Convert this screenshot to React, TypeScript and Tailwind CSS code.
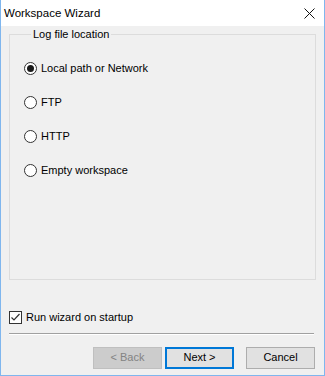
import { useState } from "react";

const options = ["Local path or Network", "FTP", "HTTP", "Empty workspace"];

export default function App() {
  const [selected, setSelected] = useState(0);
  const [runOnStartup, setRunOnStartup] = useState(true);

  return (
    <div
      className="w-[325px] h-[376px] flex flex-col bg-[#f0f0f0] border-x border-b border-[#7fb6ee] text-[11px] text-black overflow-hidden"
      style={{ fontFamily: '"Liberation Sans", Arial, sans-serif' }}
    >
      {/* title bar */}
      <div className="h-[26px] shrink-0 bg-white flex items-center justify-between pl-[3px] pr-[9px]">
        <span className="text-[11.5px] pt-[1px]">Workspace Wizard</span>
        <svg width="11" height="11" viewBox="0 0 11 11" className="mt-[1px]">
          <path d="M0.5 0.5 L10.5 10.5 M10.5 0.5 L0.5 10.5" stroke="#111" strokeWidth="1" />
        </svg>
      </div>

      <div className="flex-1 flex flex-col px-[8px]">
        <fieldset className="mt-[2px] h-[252px] border border-[#dcdcdc] pl-[14px]">
          <legend className="ml-[7px] px-[2px] leading-[13px]">Log file location</legend>
          <div className="flex flex-col pt-[10px]">
            {options.map((o, i) => (
              <button
                key={o}
                onClick={() => setSelected(i)}
                className="h-[34px] flex items-center gap-[4px] text-left"
              >
                <span className="w-[13px] h-[13px] rounded-full border border-[#333] bg-white flex items-center justify-center">
                  {selected === i && <span className="w-[7px] h-[7px] rounded-full bg-[#1a1a1a]" />}
                </span>
                <span>{o}</span>
              </button>
            ))}
          </div>
        </fieldset>

        <label
          className="mt-[29px] flex items-center gap-[4px] cursor-default"
          onClick={() => setRunOnStartup(!runOnStartup)}
        >
          <span className="w-[13px] h-[13px] border border-[#333] bg-white flex items-center justify-center">
            {runOnStartup && (
              <svg width="11" height="11" viewBox="0 0 11 11">
                <path d="M1.5 5.5 L4 8 L9.5 2" stroke="#333" strokeWidth="1.2" fill="none" />
              </svg>
            )}
          </span>
          <span>Run wizard on startup</span>
        </label>

        <div className="mt-[7px] mr-[2px] border-t border-[#a0a0a0] border-b border-b-white" />

        <div className="mt-[12px] flex justify-end pr-[1px]">
          <button
            disabled
            className="w-[69px] h-[22px] bg-[#cccccc] border border-[#bfbfbf] text-[#838383]"
          >
            &lt; Back
          </button>
          <button className="ml-[3px] w-[69px] h-[22px] bg-[#e1e1e1] border-2 border-[#0078d7]">
            Next &gt;
          </button>
          <button className="ml-[12px] w-[69px] h-[22px] bg-[#e1e1e1] border border-[#adadad]">
            Cancel
          </button>
        </div>
      </div>
    </div>
  );
}
